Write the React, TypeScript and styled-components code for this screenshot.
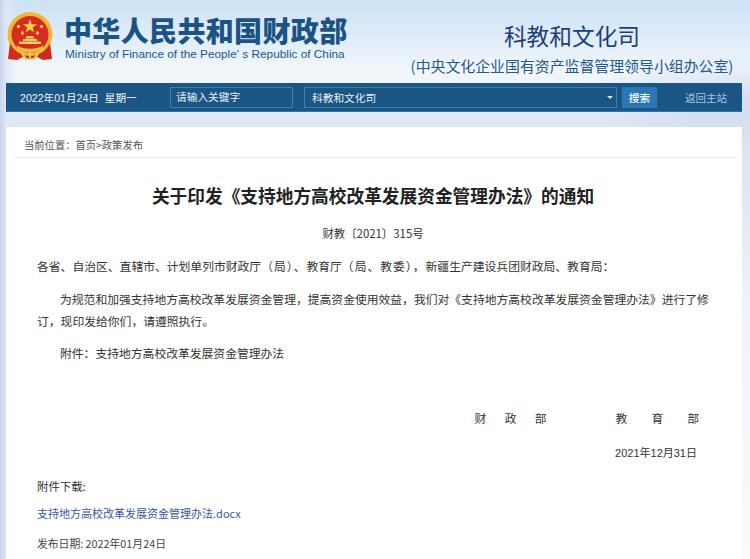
import React from "react";
import styled, { createGlobalStyle } from "styled-components";

const Global = createGlobalStyle`
  html, body { margin: 0; padding: 0; background: #fff; }
  body { font-family: "Liberation Sans", "Noto Sans CJK SC", sans-serif; }
`;

const Page = styled.div`
  width: 750px;
  height: 559px;
  overflow: hidden;
  background:
    radial-gradient(ellipse 130px 50px at 720px 100px, rgba(190, 208, 235, 0.55), rgba(190, 208, 235, 0) 100%),
    linear-gradient(90deg, #c6d4ec 0, #dfe6f4 6px, rgba(240, 244, 250, 0) 16px),
    linear-gradient(180deg, #cde2f6 0, #e0edf9 40px, #f3f7fc 72px, #dfe8f5 118px, #dbe3f2 135px, #eef2f9 300px, #fbfbfd 559px);
`;

const Header = styled.header`
  height: 83px;
  display: flex;
  justify-content: space-between;
`;

const Brand = styled.div`
  display: flex;
  padding: 12px 0 0 7px;
  gap: 11px;
`;

const BrandText = styled.div`
  display: flex;
  flex-direction: column;
  padding-top: 1px;
`;

const BrandName = styled.div`
  font-family: "Noto Sans CJK SC", sans-serif;
  font-weight: 900;
  font-size: 28px;
  line-height: 34px;
  letter-spacing: 0.35px;
  color: #1a5384;
  white-space: nowrap;
`;

const BrandEnglish = styled.div`
  font-family: "Liberation Sans", sans-serif;
  font-size: 11.8px;
  line-height: 16px;
  margin: -1px 0 0 1px;
  color: #20578a;
  white-space: nowrap;
`;

const Dept = styled.div`
  display: flex;
  flex-direction: column;
  align-items: center;
  width: 322px;
  margin-right: 17px;
  padding-top: 21px;
`;

const DeptName = styled.div`
  font-family: "Noto Sans CJK SC", sans-serif;
  font-size: 22.7px;
  line-height: 30px;
  color: #1c3f78;
  white-space: nowrap;
`;

const DeptSub = styled.div`
  font-family: "Noto Sans CJK SC", sans-serif;
  font-size: 14.9px;
  line-height: 22px;
  margin-top: 4px;
  color: #22598f;
  white-space: nowrap;
`;

const Nav = styled.nav`
  margin: 0 8px 0 6px;
  height: 29px;
  box-sizing: border-box;
  background: #1a5584;
  border-bottom: 1px solid #2f76a8;
  display: flex;
  align-items: center;
  color: #fff;
  font-size: 10.6px;
`;

const NavDate = styled.div`
  width: 164px;
  padding-left: 14px;
  box-sizing: border-box;
  white-space: nowrap;
  color: #f2f7fb;
  font-family: "Liberation Sans", "Noto Sans CJK SC", sans-serif;
`;

const SearchBox = styled.div`
  width: 123px;
  height: 21px;
  box-sizing: border-box;
  border: 1px solid #3d7fad;
  padding-left: 5px;
  line-height: 18px;
  font-size: 10.7px;
  color: #e9f1f7;
  margin-right: 11px;
  font-family: "Noto Sans CJK SC", sans-serif;
`;

const SelectBox = styled.div`
  width: 313px;
  height: 21px;
  box-sizing: border-box;
  border: 1px solid #3d7fad;
  padding: 0 3px 0 7px;
  display: flex;
  justify-content: space-between;
  align-items: center;
  font-size: 10.7px;
  color: #e9f1f7;
  margin-right: 5px;
  font-family: "Noto Sans CJK SC", sans-serif;
`;

const Caret = styled.span`
  width: 0;
  height: 0;
  border-left: 3.5px solid transparent;
  border-right: 3.5px solid transparent;
  border-top: 3.5px solid #dfeaf3;
`;

const SearchButton = styled.button`
  width: 35px;
  height: 21px;
  margin-top: 1px;
  border: 0;
  padding: 0;
  background: #2a77b5;
  color: #fff;
  font-size: 10.7px;
  font-weight: 500;
  font-family: "Noto Sans CJK SC", sans-serif;
`;

const HomeLink = styled.a`
  margin-left: 28px;
  font-size: 10.5px;
  color: #a6c8e2;
  white-space: nowrap;
  font-family: "Noto Sans CJK SC", sans-serif;
`;

const Card = styled.main`
  margin: 15px 8px 0 6px;
  background: #fff;
  height: 440px;
  padding: 0 7px;
  box-sizing: border-box;
  font-family: "Noto Sans CJK SC", sans-serif;
  color: #333;
`;

const Crumbs = styled.div`
  height: 31px;
  box-sizing: border-box;
  border-bottom: 1px solid #ececf0;
  padding: 10px 0 0 11px;
  font-size: 10.3px;
  line-height: 16px;
  color: #555;
`;

const Title = styled.h1`
  margin: 25px 0 0;
  text-align: center;
  font-size: 17.7px;
  line-height: 24px;
  font-weight: 700;
  color: #222;
  padding-right: 2px;
`;

const DocNumber = styled.div`
  margin-top: 17px;
  text-align: center;
  font-size: 11.4px;
  line-height: 18px;
  color: #333;
  padding-right: 2px;
`;

const Body = styled.div`
  padding: 0 20px 0 24px;
  font-size: 11.8px;
  color: #333;
`;

const Para = styled.p<{ $indent?: boolean; $top: number }>`
  margin: ${(p) => p.$top}px 0 0;
  line-height: 22px;
  text-indent: ${(p) => (p.$indent ? "23px" : "0")};
`;

const WidePunct = styled.span`
  letter-spacing: 1px;
`;

const Signatures = styled.div`
  display: flex;
  justify-content: flex-end;
  gap: 69px;
  margin: 43px 0 0;
  padding-right: 16px;
  line-height: 22px;
`;

const Sign = styled.span<{ $spread: number }>`
  letter-spacing: ${(p) => p.$spread}px;
  margin-right: -${(p) => p.$spread}px;
  white-space: nowrap;
`;

const SignDate = styled.div`
  margin-top: 13px;
  text-align: right;
  line-height: 22px;
  padding-right: 18px;
  font-size: 11px;
  font-family: "Liberation Sans", "Noto Sans CJK SC", sans-serif;
`;

const AttachLabel = styled.div`
  margin-top: 11px;
  line-height: 22px;
  font-size: 11.4px;
`;

const AttachLink = styled.a`
  display: block;
  margin-top: 5px;
  line-height: 22px;
  font-size: 11px;
  color: #3a57a7;
`;

const Published = styled.div`
  margin-top: 8px;
  line-height: 22px;
  font-size: 10.8px;
  color: #444;
`;

const Emblem = () => (
  <svg width="46" height="50" viewBox="0 0 46 50" style={{ flex: "none" }}>
    <circle cx="23" cy="22.5" r="22.5" fill="#efb935" />
    <circle cx="23" cy="22.5" r="18.5" fill="#d92a20" />
    <path d="M3 31 C6 38 14 44 23 44 C32 44 40 38 43 31 L45 47 L36 48 L30 45 L23 47 L16 45 L10 48 L1 47 Z" fill="#cf2a20" />
    <path d="M10 33 C14 38 32 38 36 33 L36 36 C31 42 15 42 10 36 Z" fill="#efbf45" />
    <path d="M15 42 L20 48 M31 42 L26 48 M23 38 L23 48" stroke="#f0c65a" strokeWidth="2" />
    <path d="M12 32 L34 32 L34 29.5 L12 29.5 Z M16 29 L30 29 L30 27 L16 27 Z M18 26.5 L28 26.5 L26 24 L20 24 Z" fill="#f2d25f" />
    <path d="M23 7 L24.7 12.2 L30.2 12.2 L25.7 15.4 L27.4 20.6 L23 17.4 L18.6 20.6 L20.3 15.4 L15.8 12.2 L21.3 12.2 Z" fill="#f6d24c" />
    <circle cx="11.5" cy="14.5" r="1.7" fill="#f6d24c" />
    <circle cx="34.5" cy="14.5" r="1.7" fill="#f6d24c" />
    <circle cx="15.5" cy="21" r="1.7" fill="#f6d24c" />
    <circle cx="30.5" cy="21" r="1.7" fill="#f6d24c" />
  </svg>
);

export default function App() {
  return (
    <Page>
      <Global />
      <Header>
        <Brand>
          <Emblem />
          <BrandText>
            <BrandName>中华人民共和国财政部</BrandName>
            <BrandEnglish>Ministry of Finance of the People' s Republic of China</BrandEnglish>
          </BrandText>
        </Brand>
        <Dept>
          <DeptName>科教和文化司</DeptName>
          <DeptSub>(中央文化企业国有资产监督管理领导小组办公室)</DeptSub>
        </Dept>
      </Header>
      <Nav>
        <NavDate>2022年01月24日&nbsp;&nbsp;星期一</NavDate>
        <SearchBox>请输入关键字</SearchBox>
        <SelectBox>
          科教和文化司
          <Caret />
        </SelectBox>
        <SearchButton>搜索</SearchButton>
        <HomeLink>返回主站</HomeLink>
      </Nav>
      <Card>
        <Crumbs>{"当前位置\uFF1A首页>政策发布"}</Crumbs>
        <Title>关于印发《支持地方高校改革发展资金管理办法》的通知</Title>
        <DocNumber>财教〔2021〕315号</DocNumber>
        <Body>
          <Para $top={13}>
            各省、自治区、直辖市、计划单列市财政厅
            <WidePunct>{"\uFF08局\uFF09、"}</WidePunct>
            教育厅
            <WidePunct>{"\uFF08局、教委\uFF09\uFF0C"}</WidePunct>
            {"新疆生产建设兵团财政局、教育局\uFF1A"}
          </Para>
          <Para $top={11} $indent>
            {"为规范和加强支持地方高校改革发展资金管理\uFF0C提高资金使用效益\uFF0C我们对《支持地方高校改革发展资金管理办法》进行了修订\uFF0C现印发给你们\uFF0C请遵照执行。"}
          </Para>
          <Para $top={10} $indent>{"附件\uFF1A支持地方高校改革发展资金管理办法"}</Para>
          <Signatures>
            <Sign $spread={18.3}>财政部</Sign>
            <Sign $spread={24}>教育部</Sign>
          </Signatures>
          <SignDate>2021年12月31日</SignDate>
          <AttachLabel>附件下载:</AttachLabel>
          <AttachLink>支持地方高校改革发展资金管理办法.docx</AttachLink>
          <Published>发布日期:&nbsp;2022年01月24日</Published>
        </Body>
      </Card>
    </Page>
  );
}
